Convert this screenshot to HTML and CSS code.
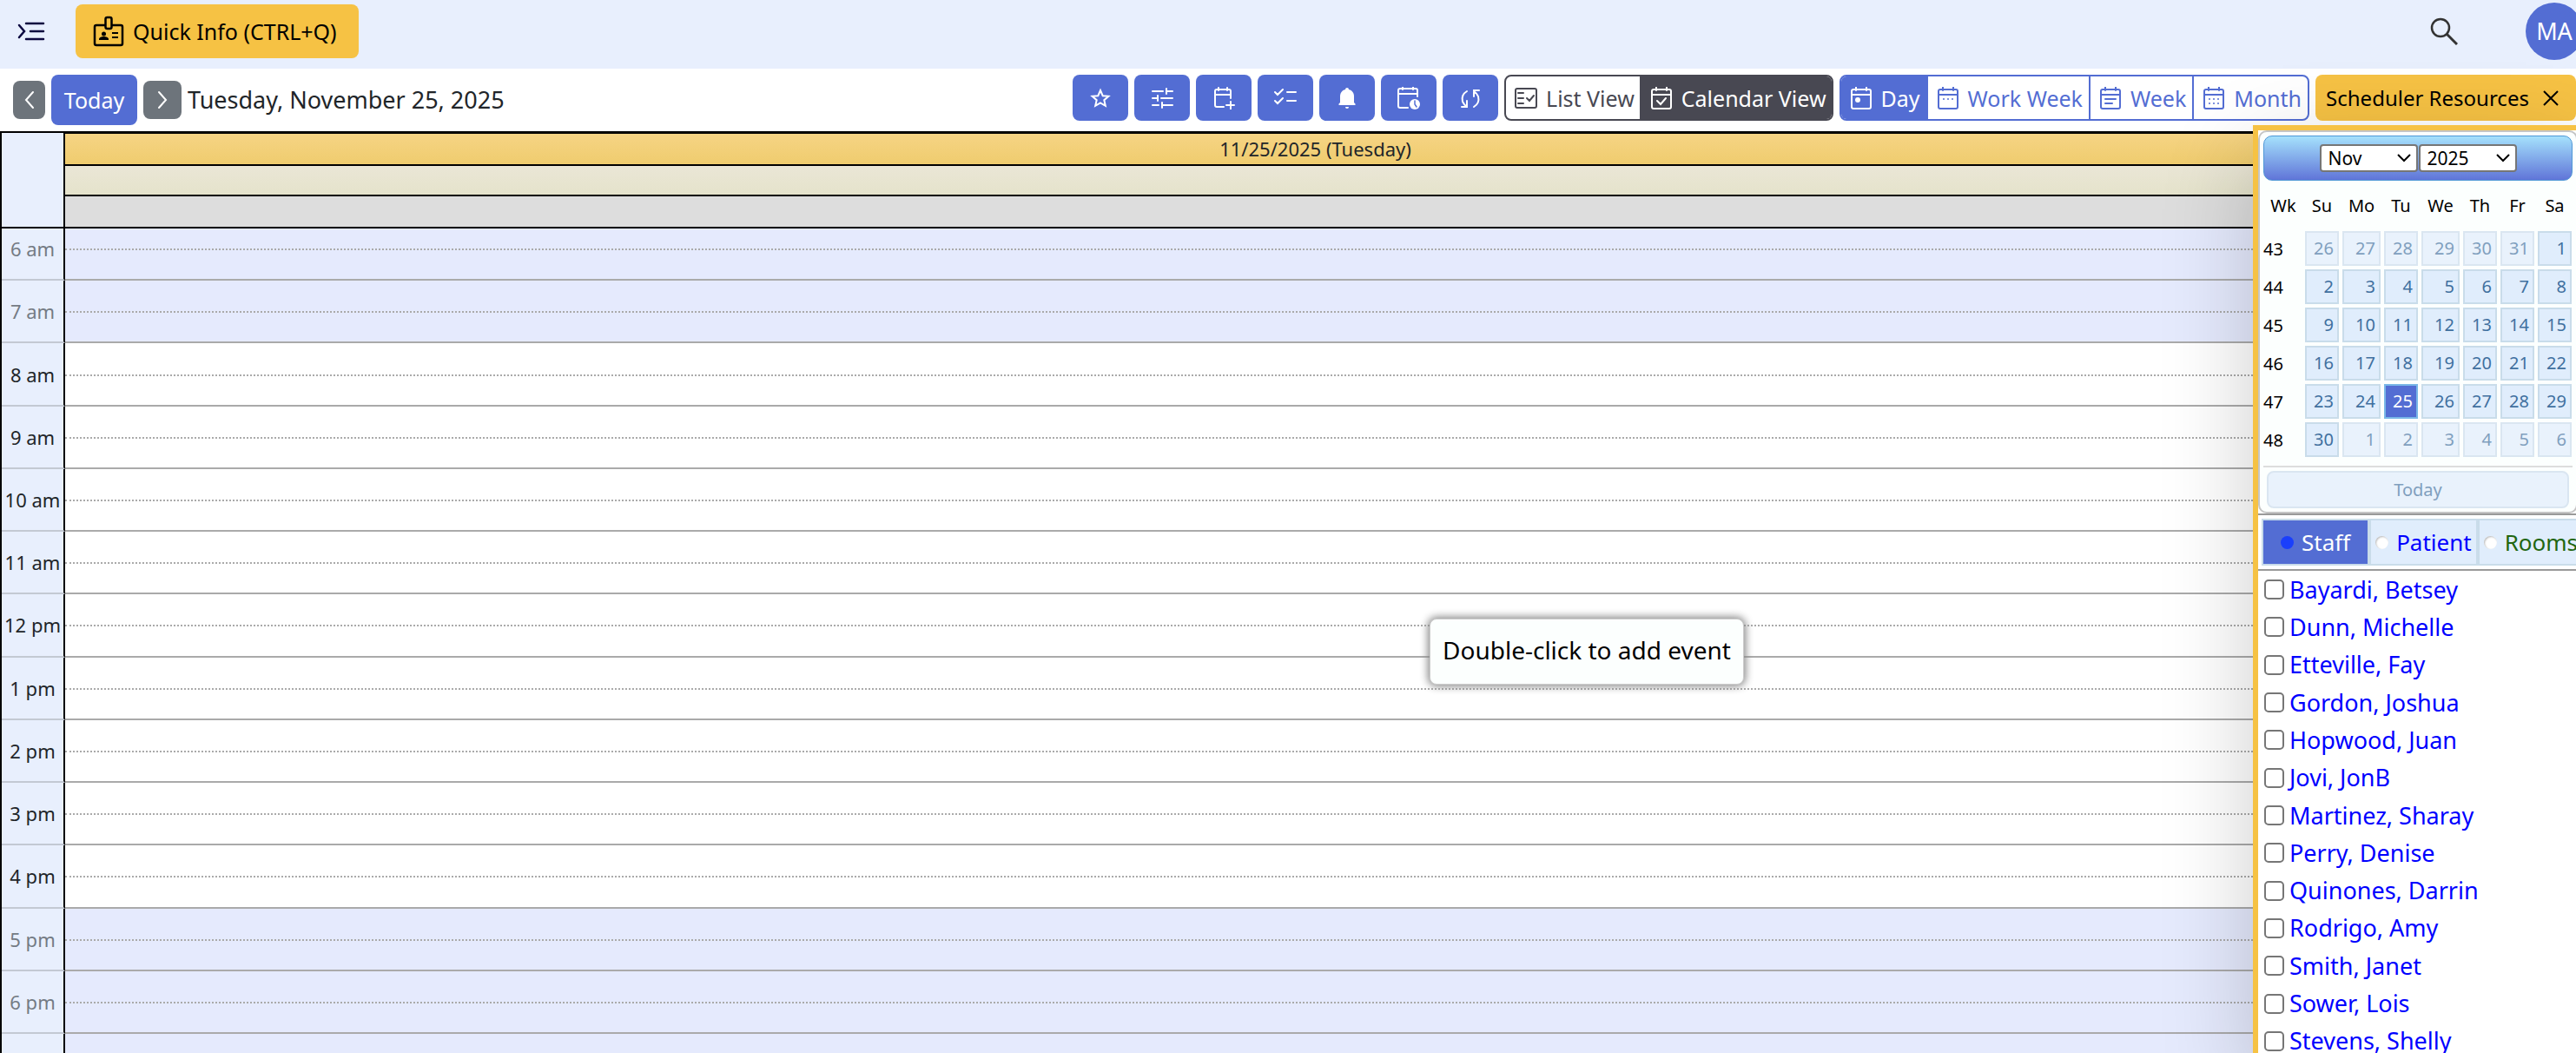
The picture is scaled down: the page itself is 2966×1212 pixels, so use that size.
FILE: index.html
```html
<!DOCTYPE html>
<html lang="en">
<head>
  <meta charset="utf-8">
  <meta name="viewport" content="width=device-width, initial-scale=1">
  <title>Scheduler</title>
  <link rel="stylesheet" href="styles.css">
</head>
<body>
  <header class="topbar">
    <button class="menu-btn" aria-label="Toggle menu">
      <svg width="32" height="24" viewBox="0 0 32 24" fill="none" stroke="#0c0840" stroke-width="2.500" stroke-linecap="round"><path d="M10 3h20M15 12h15M10 21h20M2 5l6 7-6 7"/></svg>
    </button>
    <button class="quick-info">
      <svg width="36" height="36" viewBox="0 0 36 36" fill="none" stroke="#000" stroke-width="2.500"><path d="M14 11H4a2 2 0 0 0-2 2v19a2 2 0 0 0 2 2h28a2 2 0 0 0 2-2V13a2 2 0 0 0-2-2H22"/><rect x="14.500" y="2" width="7" height="13" rx="2"/><circle cx="12.500" cy="21" r="2.500" fill="#000" stroke="none"/><path d="M7 28v-1c0-2 3-3 5.500-3s5.500 1 5.500 3v1z" fill="#000" stroke="none"/><path d="M22 20h7M22 25h7" stroke-width="2"/></svg>
      Quick Info (CTRL+Q)
    </button>
    <button class="search-btn" aria-label="Search">
      <svg width="32" height="32" viewBox="0 0 32 32" fill="none" stroke="#333" stroke-width="2.500"><circle cx="12" cy="12" r="10"/><path d="M19 19l12 12" stroke-width="3"/></svg>
    </button>
    <button class="avatar">MA</button>
  </header>

  <div class="toolbar">
    <div class="date-nav">
      <button class="nav-btn prev" aria-label="Previous day"><svg width="12" height="22" viewBox="0 0 12 22" fill="none" stroke="#fff" stroke-width="2" stroke-linecap="round"><path d="M10 2L2 11l8 9"/></svg></button>
      <button class="today-btn">Today</button>
      <button class="nav-btn" aria-label="Next day"><svg width="12" height="22" viewBox="0 0 12 22" fill="none" stroke="#fff" stroke-width="2" stroke-linecap="round"><path d="M2 2l8 9-8 9"/></svg></button>
      <span class="current-date">Tuesday, November 25, 2025</span>
    </div>

    <div class="tools">
      <button class="tool" aria-label="Favorites"><svg class="icon" viewBox="0 0 26 26"><path d="M13 4l2.700 6.200 6.700.6-5.100 4.400 1.500 6.600-5.800-3.500-5.800 3.500 1.500-6.600-5.100-4.400 6.700-.6z"/></svg></button>
      <button class="tool" aria-label="Filters"><svg class="icon" viewBox="0 0 26 26"><path d="M2 5h12M18 5h7M18 2v6M2 13h6M8 10v6M12 13h13M2 21h7M13 21h12M13 18v6"/></svg></button>
      <button class="tool" aria-label="Add event"><svg class="icon" viewBox="0 0 26 26"><path d="M21 13V5a2 2 0 0 0-2-2H5a2 2 0 0 0-2 2v16a2 2 0 0 0 2 2h8M3 9h18M7 1v3M17 1v3M21 17v9M16 21h9"/></svg></button>
      <button class="tool" aria-label="Tasks"><svg class="icon" viewBox="0 0 26 26"><path d="M1 6l3 3 6-6M1 16l3 3 6-6M15 6h10M15 16h10"/></svg></button>
      <button class="tool" aria-label="Reminders"><svg class="icon" viewBox="0 0 26 26"><path d="M13 1a2 2 0 0 1 2 2c4 1 6 4 6 8v7l1.500 1.500v1.500h-19V19.500L5 18v-7c0-4 2-7 6-8a2 2 0 0 1 2-2z" fill="#fff" stroke="none"/><path d="M11 23h4a2 2 0 0 1-4 0z" fill="#fff" stroke="none"/></svg></button>
      <button class="tool" aria-label="Scheduled"><svg class="icon" viewBox="0 0 26 26"><path d="M23 11V4a2 2 0 0 0-2-2H3a2 2 0 0 0-2 2v18a2 2 0 0 0 2 2h9M1 8h22M6 0v3M18 0v3"/><circle cx="20" cy="20" r="6" fill="#fff" stroke="none"/><path d="M20 16v4l2 3" stroke="#536dd3" stroke-width="1.500"/></svg></button>
      <button class="tool" aria-label="Refresh"><svg class="icon" viewBox="0 0 26 26"><path d="M9 5C4 8 3 13 4 17c1 2 2 4 5 6M9 16v7H3M17 23c5-3 6-8 5-12-1-3-2-4-5-6M17 11V4h6"/></svg></button>
    </div>

    <div class="group views">
      <button class="seg"><svg class="icon" viewBox="0 0 26 26"><rect x="1" y="2" width="24" height="22" rx="2"/><path d="M4 7h6M4 13h6M4 19h6M14 13l3 3 5-6"/></svg>List View</button>
      <button class="seg on"><svg class="icon" viewBox="0 0 26 26"><rect x="2" y="3" width="22" height="22" rx="2"/><path d="M2 9h22M7 0v4M19 0v4M8 16l4 4 6-7"/></svg>Calendar View</button>
    </div>

    <div class="group ranges">
      <button class="seg on"><svg class="icon" viewBox="0 0 26 26"><rect x="2" y="3" width="22" height="22" rx="2"/><path d="M2 9h22M7 0v4M19 0v4"/><circle cx="9" cy="15" r="3" fill="#fff" stroke="none"/></svg>Day</button>
      <button class="seg"><svg class="icon" viewBox="0 0 26 26"><rect x="2" y="3" width="22" height="22" rx="2"/><path d="M2 9h22M7 0v4M19 0v4"/><path d="M8 14h0M13 14h0M18 14h0"/></svg>Work Week</button>
      <button class="seg"><svg class="icon" viewBox="0 0 26 26"><rect x="2" y="3" width="22" height="22" rx="2"/><path d="M2 9h22M7 0v4M19 0v4M7 14h12M7 19h8"/></svg>Week</button>
      <button class="seg"><svg class="icon" viewBox="0 0 26 26"><rect x="2" y="3" width="22" height="22" rx="2"/><path d="M2 9h22M7 0v4M19 0v4M8 14h0M13 14h0M18 14h0M8 19h0M13 19h0M18 19h0"/></svg>Month</button>
    </div>

    <button class="resources-btn">Scheduler Resources
      <svg width="18" height="18" viewBox="0 0 18 18" fill="none" stroke="#000" stroke-width="2"><path d="M1 1l16 16M17 1L1 17"/></svg>
    </button>
  </div>

  <main class="scheduler">
    <div class="cal-head">
      <div class="corner"></div>
      <div class="head-rows">
        <div class="day-title">11/25/2025 (Tuesday)</div>
        <div class="allday"></div>
        <div class="summary"></div>
      </div>
    </div>
    <div class="cal-body">
      <div class="hours">
        <div class="hour off"><span class="label">6 am</span><div class="slot"></div></div>
        <div class="hour off"><span class="label">7 am</span><div class="slot"></div></div>
        <div class="hour"><span class="label">8 am</span><div class="slot"></div></div>
        <div class="hour"><span class="label">9 am</span><div class="slot"></div></div>
        <div class="hour"><span class="label">10 am</span><div class="slot"></div></div>
        <div class="hour"><span class="label">11 am</span><div class="slot"></div></div>
        <div class="hour"><span class="label">12 pm</span><div class="slot"></div></div>
        <div class="hour"><span class="label">1 pm</span><div class="slot"></div></div>
        <div class="hour"><span class="label">2 pm</span><div class="slot"></div></div>
        <div class="hour"><span class="label">3 pm</span><div class="slot"></div></div>
        <div class="hour"><span class="label">4 pm</span><div class="slot"></div></div>
        <div class="hour off"><span class="label">5 pm</span><div class="slot"></div></div>
        <div class="hour off"><span class="label">6 pm</span><div class="slot"></div></div>
        <div class="hour off tail"><span class="label"></span><div class="slot"></div></div>
      </div>
    </div>
  </main>

  <div class="tooltip" role="tooltip">Double-click to add event</div>

  <aside class="resources">
    <div class="datepicker">
      <div class="dp-head">
        <select aria-label="Month"><option>Nov</option></select>
        <select aria-label="Year"><option>2025</option></select>
      </div>
      <table class="dp-table">
        <colgroup><col class="c-wk"><col class="c-su"><col class="c-mo"><col class="c-su"><col class="c-mo"><col class="c-su"><col class="c-su"><col class="c-su"></colgroup>
        <thead>
          <tr><th>Wk</th><th>Su</th><th>Mo</th><th>Tu</th><th>We</th><th>Th</th><th>Fr</th><th>Sa</th></tr>
        </thead>
        <tbody>
          <tr><td class="wk">43</td><td><a class="other" href="#">26</a></td><td><a class="other" href="#">27</a></td><td><a class="other" href="#">28</a></td><td><a class="other" href="#">29</a></td><td><a class="other" href="#">30</a></td><td><a class="other" href="#">31</a></td><td><a href="#">1</a></td></tr>
          <tr><td class="wk">44</td><td><a href="#">2</a></td><td><a href="#">3</a></td><td><a href="#">4</a></td><td><a href="#">5</a></td><td><a href="#">6</a></td><td><a href="#">7</a></td><td><a href="#">8</a></td></tr>
          <tr><td class="wk">45</td><td><a href="#">9</a></td><td><a href="#">10</a></td><td><a href="#">11</a></td><td><a href="#">12</a></td><td><a href="#">13</a></td><td><a href="#">14</a></td><td><a href="#">15</a></td></tr>
          <tr><td class="wk">46</td><td><a href="#">16</a></td><td><a href="#">17</a></td><td><a href="#">18</a></td><td><a href="#">19</a></td><td><a href="#">20</a></td><td><a href="#">21</a></td><td><a href="#">22</a></td></tr>
          <tr><td class="wk">47</td><td><a href="#">23</a></td><td><a href="#">24</a></td><td><a class="today" href="#">25</a></td><td><a href="#">26</a></td><td><a href="#">27</a></td><td><a href="#">28</a></td><td><a href="#">29</a></td></tr>
          <tr><td class="wk">48</td><td><a href="#">30</a></td><td><a class="other" href="#">1</a></td><td><a class="other" href="#">2</a></td><td><a class="other" href="#">3</a></td><td><a class="other" href="#">4</a></td><td><a class="other" href="#">5</a></td><td><a class="other" href="#">6</a></td></tr>
        </tbody>
      </table>
      <div class="dp-foot"><button class="dp-today">Today</button></div>
    </div>

    <div class="tabs">
      <label class="tab on"><input type="radio" name="kind" checked>Staff</label>
      <label class="tab"><input type="radio" name="kind">Patient</label>
      <label class="tab rooms"><input type="radio" name="kind">Rooms</label>
    </div>

    <div class="staff">
      <label><input type="checkbox">Bayardi, Betsey</label>
      <label><input type="checkbox">Dunn, Michelle</label>
      <label><input type="checkbox">Etteville, Fay</label>
      <label><input type="checkbox">Gordon, Joshua</label>
      <label><input type="checkbox">Hopwood, Juan</label>
      <label><input type="checkbox">Jovi, JonB</label>
      <label><input type="checkbox">Martinez, Sharay</label>
      <label><input type="checkbox">Perry, Denise</label>
      <label><input type="checkbox">Quinones, Darrin</label>
      <label><input type="checkbox">Rodrigo, Amy</label>
      <label><input type="checkbox">Smith, Janet</label>
      <label><input type="checkbox">Sower, Lois</label>
      <label><input type="checkbox">Stevens, Shelly</label>
    </div>
  </aside>
</body>
</html>
```

FILE: styles.css
```css
* {
  box-sizing: border-box;
}
body {
  margin: 0;
  height: 100vh;
  display: flex;
  flex-direction: column;
  position: relative;
  overflow: hidden;
  background: #fff;
  color: #212529;
  font-family: "Noto Sans", "Open Sans", sans-serif;
  font-size: 27px;
}
button, select, input {
  font-family: inherit;
  margin: 0;
}
button {
  display: flex;
  align-items: center;
  justify-content: center;
  padding: 0;
  border: none;
  border-radius: 8px;
  font-size: 25px;
  white-space: nowrap;
  cursor: pointer;
}
svg {
  flex: none;
}

/* top bar */
.topbar {
  flex: none;
  height: 79px;
  padding: 0 0 8px 20px;
  display: flex;
  align-items: center;
  background: #e8effd;
}
.menu-btn, .search-btn {
  background: none;
}
.quick-info {
  height: 62px;
  margin-left: 35px;
  padding: 0 25px 0 20px;
  gap: 10px;
  background: #f6c244;
  color: #000;
}
.search-btn {
  margin-left: auto;
}
.avatar {
  flex: none;
  width: 66px;
  height: 66px;
  margin: 0 -8px 0 78px;
  border-radius: 50%;
  background: #536dd3;
  color: #fff;
  font-size: 27px;
}

/* toolbar */
.toolbar {
  flex: none;
  height: 72px;
  padding: 0 0 5px 15px;
  display: flex;
  align-items: center;
  gap: 7px;
}
.date-nav {
  display: flex;
  align-items: center;
  gap: 7px;
  padding-top: 4px;
}
.nav-btn {
  width: 44px;
  height: 44px;
  background: #6d747b;
}
.nav-btn.prev {
  width: 37px;
}
.today-btn {
  width: 99px;
  height: 58px;
  background: #536dd3;
  color: #fff;
}
.tools {
  display: flex;
  gap: 7px;
  margin-left: auto;
}
.tool {
  width: 64px;
  height: 53px;
  background: #536dd3;
  color: #fff;
}
.icon {
  width: 26px;
  height: 26px;
  fill: none;
  stroke: currentColor;
  stroke-width: 2;
  stroke-linecap: round;
}
.group {
  display: flex;
  height: 53px;
  border: 2px solid #484852;
  border-radius: 8px;
  overflow: hidden;
}
.seg {
  gap: 10px;
  padding: 0 7px 0 10px;
  border-radius: 0;
  background: none;
  color: #484852;
}
.views .seg {
  padding: 0 6px 0 10px;
}
.views .seg.on {
  padding-left: 12px;
  background: #484852;
  color: #fff;
}
.ranges {
  border-color: #536dd3;
}
.ranges .seg {
  border-right: 2px solid #536dd3;
  color: #536dd3;
}
.ranges .seg:last-child {
  border-right: none;
}
.ranges .seg.on {
  background: #536dd3;
  color: #fff;
}
.resources-btn {
  width: 300px;
  height: 53px;
  padding-right: 8px;
  gap: 16px;
  background: #f6c244;
  color: #000;
  font-size: 24px;
}

/* calendar */
.scheduler {
  flex: 1;
  min-height: 0;
  display: flex;
  flex-direction: column;
  border-left: 2px solid #000;
}
.cal-head {
  display: flex;
  border-top: 2px solid #000;
  border-bottom: 2px solid #000;
}
.corner {
  width: 73px;
  border-right: 2px solid #000;
  background: #e8effd;
}
.head-rows {
  flex: 1;
  border-top: 1px solid #000;
}
.day-title {
  height: 37px;
  padding-right: 12px;
  border-bottom: 2px solid #000;
  background: linear-gradient(#f6d484, #efcc6e);
  font-size: 22px;
  line-height: 34px;
  text-align: center;
}
.allday {
  height: 35px;
  border-bottom: 2px solid #000;
  background: linear-gradient(#eae6d6, #e5e3cb);
}
.summary {
  height: 35px;
  background: #ddd;
}
.cal-body {
  flex: 1;
  min-height: 0;
  display: flex;
  overflow: hidden;
}
.hours {
  flex: 1;
  margin-top: -12px;
  display: grid;
  grid-template-rows: repeat(13, 1fr) 22px;
}
.hour {
  display: flex;
}
.label {
  width: 73px;
  display: flex;
  align-items: center;
  justify-content: center;
  border-right: 2px solid #000;
  border-bottom: 2px solid #c3c9d3;
  background: #e8effd;
  font-size: 22px;
}
.slot {
  flex: 1;
  border-bottom: 2px solid #aaa;
}
.slot::before {
  content: "";
  display: block;
  height: 50%;
  border-bottom: 2px dotted #aaa;
}
.off .label {
  color: #747b84;
}
.off .slot {
  background: #e5eafd;
}
.tail .label,
.tail .slot {
  border-bottom: none;
}
.tail .slot::before {
  display: none;
}
.tooltip {
  position: absolute;
  left: 1646px;
  top: 712px;
  padding: 16px 14px 20px;
  border: 1px solid #ccc;
  border-radius: 8px;
  background: #fcfffe;
  box-shadow: 0 0 10px 2px #888;
  color: #000;
  font-size: 28px;
  line-height: 38px;
}

/* resources panel, floats over the calendar */
.resources {
  position: absolute;
  top: 144px;
  right: -8px;
  bottom: -8px;
  width: 380px;
  display: flex;
  flex-direction: column;
  border-left: 6px solid #f6c244;
  border-top: 6px solid #f6c244;
  background: #fff;
  box-shadow: 0 32px 100px rgba(0, 0, 0, .2);
}
.datepicker {
  width: 368px;
  padding: 4px 4px 0;
  border: 2px solid #c5c5c5;
  border-radius: 10px;
  background: #fcfffe;
  color: #000;
}
.dp-head {
  height: 52px;
  display: flex;
  align-items: center;
  justify-content: center;
  gap: 1px;
  border: 1px solid #4f97d6;
  border-radius: 10px;
  background: linear-gradient(#a5e1fc, #6075d8);
}
.dp-head select {
  appearance: none;
  width: 113px;
  height: 32px;
  padding: 0 8px;
  border: 2px solid #767676;
  border-radius: 4px;
  background: #fff url("data:image/svg+xml,%3Csvg xmlns='http://www.w3.org/2000/svg' width='16' height='10' fill='none' stroke='black' stroke-width='2'%3E%3Cpath d='M1 1l7 7 7-7'/%3E%3C/svg%3E") no-repeat right 6px center;
  color: #000;
  font-size: 21px;
}
.dp-table {
  width: 100%;
  table-layout: fixed;
  border-collapse: collapse;
  font-size: 20px;
}
.c-wk {
  width: 46px;
}
.c-su {
  width: 43px;
}
.c-mo {
  width: 48px;
}
.dp-table th {
  height: 56px;
  padding: 0;
  font-weight: normal;
}
.dp-table td {
  height: 44px;
  padding: 2px;
}
.dp-table .wk {
  padding: 0;
}
.dp-table a {
  display: block;
  height: 40px;
  padding-right: 4px;
  border: 2px solid #c9dcea;
  background: #e0edfc;
  color: #40709f;
  line-height: 36px;
  text-align: right;
  text-decoration: none;
}
.dp-table a.other {
  border-color: #dae6f1;
  background: #e9f2fc;
  color: #809fbe;
}
.dp-table a.today {
  border-color: #79b7e7;
  background: #536dd3;
  color: #fff;
}
.dp-foot {
  margin-top: 8px;
  padding: 4px;
  border-top: 2px solid #ddd;
}
.dp-today {
  width: 100%;
  height: 43px;
  border: 2px solid #dae6f1;
  background: #e9f2fc;
  color: #809fbe;
  font-size: 20px;
}
.tabs {
  flex: none;
  height: 66px;
  padding: 4px 0 4px 4px;
  display: flex;
  border-top: 2px solid #999;
  border-bottom: 2px solid #999;
}
.tab {
  flex: none;
  display: flex;
  align-items: center;
  gap: 9px;
  padding: 0 5px;
  border: 2px solid #c9dcea;
  background: #e0edfc;
  color: #00f;
  font-size: 26px;
}
.tab.on {
  padding: 0 20px;
  background: #536dd3;
  color: #fff;
}
.tab.rooms {
  color: #261;
}
.tab input {
  appearance: none;
  width: 15px;
  height: 15px;
  border-radius: 50%;
  background: #fff;
  box-shadow: inset 1px 1px 2px #bbb;
}
.tab input:checked {
  background: #1a3ffb;
  box-shadow: none;
}
.staff {
  flex: 1;
  min-height: 0;
  display: flex;
  flex-direction: column;
  color: #00f;
}
.staff label {
  flex: 1;
  min-height: 0;
  padding-left: 7px;
  display: flex;
  align-items: center;
  gap: 6px;
  line-height: 40px;
}
.staff input {
  appearance: none;
  width: 23px;
  height: 23px;
  border: 2px solid #767676;
  border-radius: 5px;
  background: #fff;
}
```
